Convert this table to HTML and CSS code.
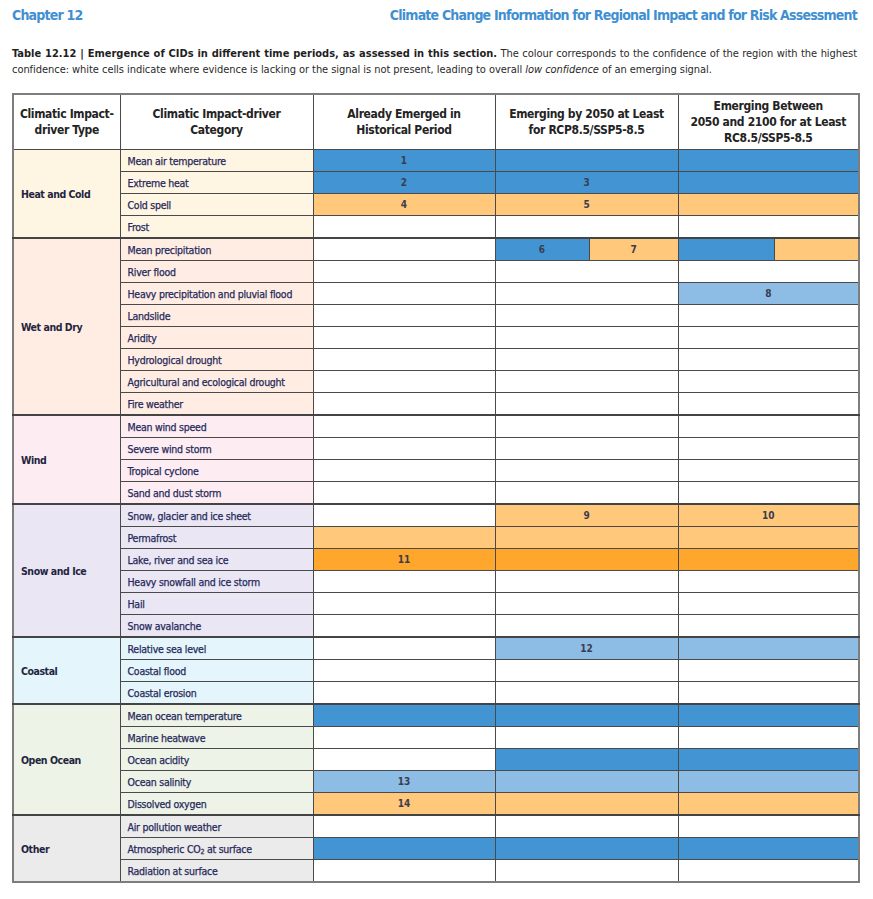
FILE: index.html
```html
<!DOCTYPE html>
<html lang="en">
<head>
<meta charset="utf-8">
<title>Table 12.12</title>
<link rel="stylesheet" href="styles.css">
</head>
<body>
<div class="page">
  <header class="running">
    <span class="chap">Chapter 12</span>
    <span class="title">Climate Change Information for Regional Impact and for Risk Assessment</span>
  </header>
  <p class="caption"><b>Table 12.12 | Emergence of CIDs in different time periods, as assessed in this section.</b> The colour corresponds to the confidence of the region with the highest confidence: white cells indicate where evidence is lacking or the signal is not present, leading to overall <i>low confidence</i> of an emerging signal.</p>
  <table class="cid">
    <colgroup>
      <col class="c-type"><col class="c-cat"><col class="c-hist"><col class="c-a1"><col class="c-a2"><col class="c-b1"><col class="c-b2">
    </colgroup>
    <thead>
      <tr>
        <th>Climatic Impact-<br>driver Type</th>
        <th>Climatic Impact-driver<br>Category</th>
        <th>Already Emerged in<br>Historical Period</th>
        <th colspan="2">Emerging by 2050 at Least<br>for RCP8.5/SSP5-8.5</th>
        <th colspan="2">Emerging Between<br>2050 and 2100 for at Least<br>RC8.5/SSP5-8.5</th>
      </tr>
    </thead>
    <tbody class="g-heat">
      <tr><th class="type" rowspan="4">Heat and Cold</th><td class="cat">Mean air temperature</td><td class="b">1</td><td class="b" colspan="2"></td><td class="b" colspan="2"></td></tr>
      <tr><td class="cat">Extreme heat</td><td class="b">2</td><td class="b" colspan="2">3</td><td class="b" colspan="2"></td></tr>
      <tr><td class="cat">Cold spell</td><td class="o">4</td><td class="o" colspan="2">5</td><td class="o" colspan="2"></td></tr>
      <tr><td class="cat">Frost</td><td></td><td colspan="2"></td><td colspan="2"></td></tr>
    </tbody>
    <tbody class="g-wet">
      <tr><th class="type" rowspan="8">Wet and Dry</th><td class="cat">Mean precipitation</td><td></td><td class="b">6</td><td class="o">7</td><td class="b"></td><td class="o"></td></tr>
      <tr><td class="cat">River flood</td><td></td><td colspan="2"></td><td colspan="2"></td></tr>
      <tr><td class="cat">Heavy precipitation and pluvial flood</td><td></td><td colspan="2"></td><td class="lb" colspan="2">8</td></tr>
      <tr><td class="cat">Landslide</td><td></td><td colspan="2"></td><td colspan="2"></td></tr>
      <tr><td class="cat">Aridity</td><td></td><td colspan="2"></td><td colspan="2"></td></tr>
      <tr><td class="cat">Hydrological drought</td><td></td><td colspan="2"></td><td colspan="2"></td></tr>
      <tr><td class="cat">Agricultural and ecological drought</td><td></td><td colspan="2"></td><td colspan="2"></td></tr>
      <tr><td class="cat">Fire weather</td><td></td><td colspan="2"></td><td colspan="2"></td></tr>
    </tbody>
    <tbody class="g-wind">
      <tr><th class="type" rowspan="4">Wind</th><td class="cat">Mean wind speed</td><td></td><td colspan="2"></td><td colspan="2"></td></tr>
      <tr><td class="cat">Severe wind storm</td><td></td><td colspan="2"></td><td colspan="2"></td></tr>
      <tr><td class="cat">Tropical cyclone</td><td></td><td colspan="2"></td><td colspan="2"></td></tr>
      <tr><td class="cat">Sand and dust storm</td><td></td><td colspan="2"></td><td colspan="2"></td></tr>
    </tbody>
    <tbody class="g-snow">
      <tr><th class="type" rowspan="6">Snow and Ice</th><td class="cat">Snow, glacier and ice sheet</td><td></td><td class="o" colspan="2">9</td><td class="o" colspan="2">10</td></tr>
      <tr><td class="cat">Permafrost</td><td class="o"></td><td class="o" colspan="2"></td><td class="o" colspan="2"></td></tr>
      <tr><td class="cat">Lake, river and sea ice</td><td class="do">11</td><td class="do" colspan="2"></td><td class="do" colspan="2"></td></tr>
      <tr><td class="cat">Heavy snowfall and ice storm</td><td></td><td colspan="2"></td><td colspan="2"></td></tr>
      <tr><td class="cat">Hail</td><td></td><td colspan="2"></td><td colspan="2"></td></tr>
      <tr><td class="cat">Snow avalanche</td><td></td><td colspan="2"></td><td colspan="2"></td></tr>
    </tbody>
    <tbody class="g-coast">
      <tr><th class="type" rowspan="3">Coastal</th><td class="cat">Relative sea level</td><td></td><td class="lb" colspan="2">12</td><td class="lb" colspan="2"></td></tr>
      <tr><td class="cat">Coastal flood</td><td></td><td colspan="2"></td><td colspan="2"></td></tr>
      <tr><td class="cat">Coastal erosion</td><td></td><td colspan="2"></td><td colspan="2"></td></tr>
    </tbody>
    <tbody class="g-ocean">
      <tr><th class="type" rowspan="5">Open Ocean</th><td class="cat">Mean ocean temperature</td><td class="b"></td><td class="b" colspan="2"></td><td class="b" colspan="2"></td></tr>
      <tr><td class="cat">Marine heatwave</td><td></td><td colspan="2"></td><td colspan="2"></td></tr>
      <tr><td class="cat">Ocean acidity</td><td></td><td class="b" colspan="2"></td><td class="b" colspan="2"></td></tr>
      <tr><td class="cat">Ocean salinity</td><td class="lb">13</td><td class="lb" colspan="2"></td><td class="lb" colspan="2"></td></tr>
      <tr><td class="cat">Dissolved oxygen</td><td class="o">14</td><td class="o" colspan="2"></td><td class="o" colspan="2"></td></tr>
    </tbody>
    <tbody class="g-other">
      <tr><th class="type" rowspan="3">Other</th><td class="cat">Air pollution weather</td><td></td><td colspan="2"></td><td colspan="2"></td></tr>
      <tr><td class="cat">Atmospheric CO<sub>2</sub> at surface</td><td class="b"></td><td class="b" colspan="2"></td><td class="b" colspan="2"></td></tr>
      <tr><td class="cat">Radiation at surface</td><td></td><td colspan="2"></td><td colspan="2"></td></tr>
    </tbody>
  </table>
</div>
</body>
</html>
```
FILE: styles.css
```css
html, body {
  margin: 0;
  padding: 0;
  background: #ffffff;
}
body {
  font-family: "DejaVu Sans Condensed", "DejaVu Sans", sans-serif;
  font-stretch: condensed;
  color: #23264f;
}
.page {
  padding: 5px 16px 0 12px;
}
.running {
  display: flex;
  justify-content: space-between;
  align-items: baseline;
  font-weight: bold;
  font-size: 14px;
  letter-spacing: -0.8px;
  color: #3f8fd2;
  line-height: 20px;
}
.caption {
  margin: 21px 0 0 0;
  font-size: 11px;
  line-height: 16px;
  color: #2a2a2a;
  text-align: justify;
  letter-spacing: -0.05px;
}
.caption b {
  font-weight: bold;
  letter-spacing: 0;
  color: #1f1f1f;
}
table.cid {
  margin-top: 15px;
  width: 845px;
  table-layout: fixed;
  border-collapse: collapse;
  border: 2px solid #7d7d7d;
}
col.c-type { width: 107px; }
col.c-cat { width: 193px; }
col.c-hist { width: 182px; }
col.c-a1 { width: 94px; }
col.c-a2 { width: 89px; }
col.c-b1 { width: 96px; }
col.c-b2 { width: 85px; }

.cid th, .cid td {
  border: 1px solid #4a4a4a;
  padding: 0;
}
.cid thead th {
  height: 54px;
  font-size: 12px;
  letter-spacing: -0.35px;
  line-height: 16px;
  font-weight: bold;
  color: #232323;
  text-align: center;
  vertical-align: middle;
  background: #fff;
}
.cid tbody td {
  height: 21px;
  font-size: 10px;
  font-weight: bold;
  text-align: center;
  color: #3a3d50;
  vertical-align: middle;
  line-height: 12px;
}
.cid tbody th.type {
  text-align: left;
  padding-left: 7px;
  font-size: 10.5px;
  letter-spacing: -0.45px;
  font-weight: bold;
  color: #232540;
  vertical-align: middle;
}
.cid tbody td.cat {
  text-align: left;
  padding-left: 7px;
  font-size: 10.5px;
  font-weight: normal;
  color: #272a5a;
  letter-spacing: -0.25px;
  -webkit-text-stroke: 0.25px #272a5a;
}
.cid td.cat sub {
  font-size: 7px;
  vertical-align: -1px;
  line-height: 0;
}
.cid tbody:not(:first-of-type) tr:first-child > * {
  border-top: 2px solid #444;
}

.g-heat .type, .g-heat .cat { background: #fff5e3; }
.g-wet .type, .g-wet .cat { background: #ffede3; }
.g-wind .type, .g-wind .cat { background: #fdedf3; }
.g-snow .type, .g-snow .cat { background: #eae6f4; }
.g-coast .type, .g-coast .cat { background: #e4f6fc; }
.g-ocean .type, .g-ocean .cat { background: #edf3e7; }
.g-other .type, .g-other .cat { background: #ebebeb; }

.cid td.b { background: #4394d2; }
.cid td.lb { background: #8dbce4; }
.cid td.o { background: #ffc87a; }
.cid td.do { background: #ffa62c; }
```
